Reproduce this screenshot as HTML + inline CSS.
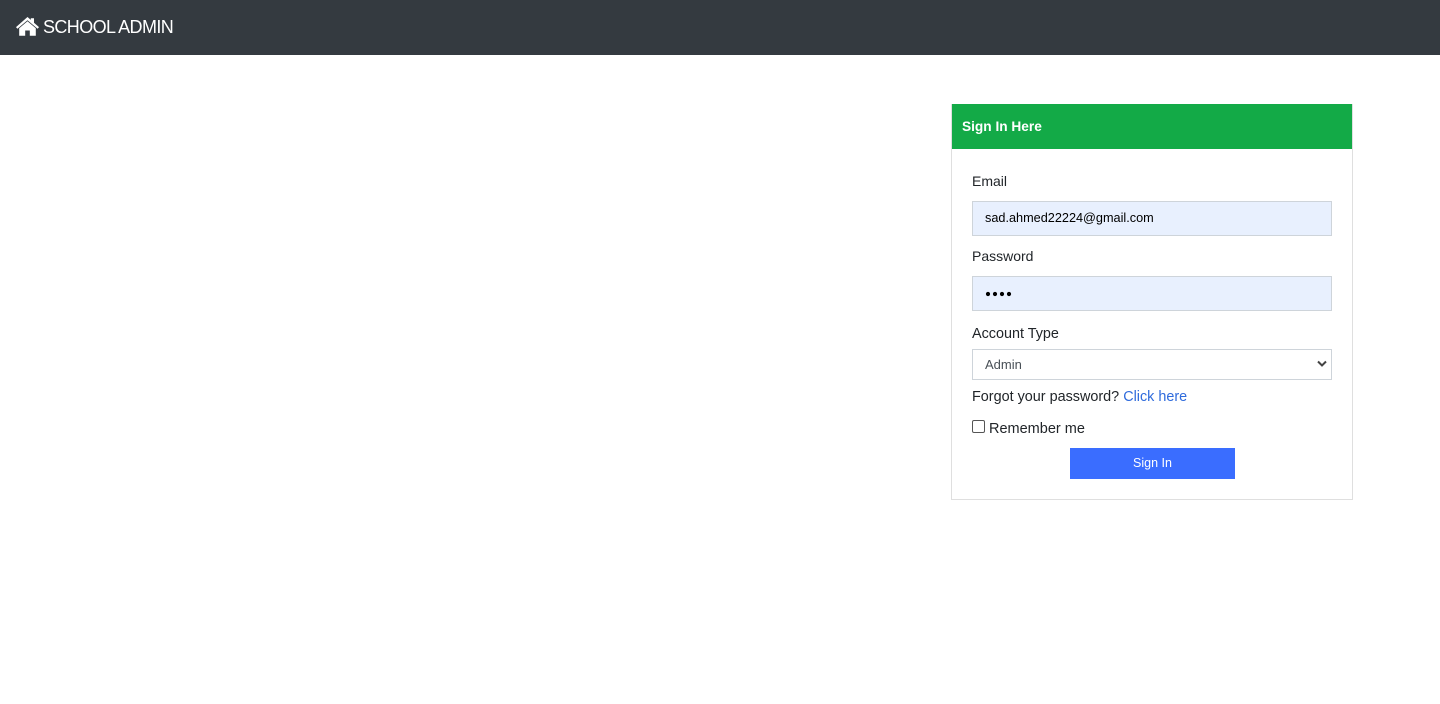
<!DOCTYPE html>
<html>
<head>
<meta charset="utf-8">
<title>School Admin</title>
<style>
html,body{margin:0;padding:0;width:1440px;height:704px;overflow:hidden;background:#fff;font-family:"Liberation Sans",sans-serif;color:#212529}
.a{position:absolute;white-space:nowrap}
.nav{left:0;top:0;width:1440px;height:55px;background:#343a40}
.brand{left:43px;top:16px;font-size:18px;letter-spacing:-.6px;line-height:23px;color:#fff}
.card{left:951px;top:104px;width:400px;height:394px;border:1px solid #dfdfdf;background:#fff}
.head{left:952px;top:104px;width:400px;height:45px;background:#13aa47}
.title{left:962px;top:118px;font-size:13.7px;line-height:17px;font-weight:bold;color:#fff}
.label{left:972px;font-size:14.4px;line-height:20px;color:#212529}
.input{left:972px;width:358px;height:33px;background:#e8f0fe;border:1px solid #ced4da}
.val{left:985px;font-size:12.7px;line-height:16px;color:#000}
.select{left:972px;top:349px;width:358px;height:29px;border:1px solid #ced4da;background:#fff}
.btn{left:1070px;top:448px;width:165px;height:31px;background:#3a6dff;color:#fff;font-size:12.5px;line-height:31px;text-align:center}
.cb{left:972px;top:420px;width:11px;height:11px;border:1px solid #555;border-radius:2px;background:#fff}
</style>
</head>
<body>
<div class="a nav"></div>
<svg class="a" style="left:16px;top:17px" width="23" height="19" viewBox="0 0 23 19">
<path d="M11.5 0 L14.8 2.9 V1.2 H18 V5.7 L23 10.1 L21.6 11.8 L11.5 3.2 L1.4 11.8 L0 10.1 Z" fill="#fff"/>
<path d="M11.5 4.3 L19.8 11.3 V18.8 H13.8 V13.5 H9.2 V18.8 H3.2 V11.3 Z" fill="#fff"/>
</svg>
<div class="a brand">SCHOOL ADMIN</div>

<div class="a card"></div>
<div class="a head"></div>
<div class="a title">Sign In Here</div>

<div class="a label" style="top:171px;font-size:14px">Email</div>
<div class="a input" style="top:201px"></div>
<div class="a val" style="top:210px">sad.ahmed22224@gmail.com</div>

<div class="a label" style="top:246px;font-size:14px">Password</div>
<div class="a input" style="top:276px"></div>
<svg class="a" style="left:985px;top:290px" width="28" height="8" viewBox="0 0 28 8" fill="#000">
<circle cx="3" cy="4" r="2.1"/><circle cx="10" cy="4" r="2.1"/><circle cx="17" cy="4" r="2.1"/><circle cx="24" cy="4" r="2.1"/>
</svg>

<div class="a label" style="top:324px">Account Type</div>
<div class="a select"></div>
<div class="a val" style="top:357px;color:#495057;font-size:13px">Admin</div>
<svg class="a" style="left:1317px;top:360px" width="10" height="8" viewBox="0 0 10 8">
<path d="M1 1.5 L5 5.5 L9 1.5" fill="none" stroke="#444" stroke-width="2"/>
</svg>

<div class="a label" style="top:387px">Forgot your password? <span style="color:#2f6bdc">Click here</span></div>

<div class="a cb"></div>
<div class="a label" style="left:989px;top:419px;font-size:14.5px">Remember me</div>

<div class="a btn">Sign In</div>
</body>
</html>
